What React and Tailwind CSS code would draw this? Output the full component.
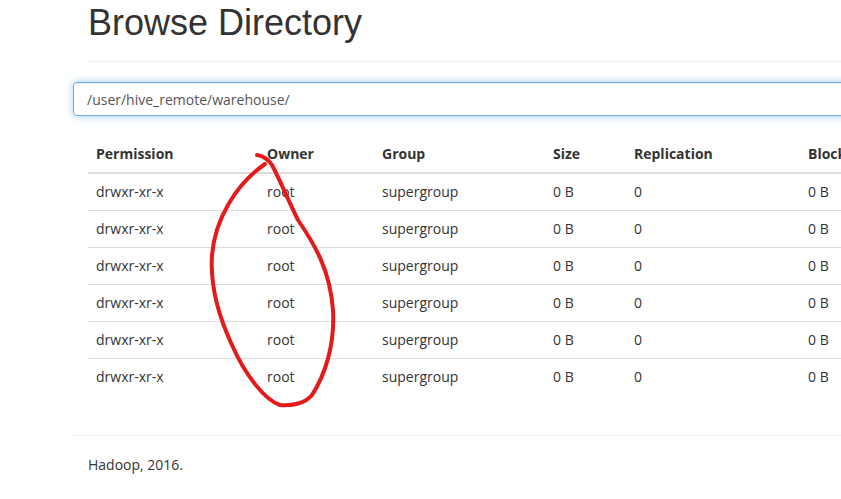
const rows = Array.from({ length: 6 }, () => ({
  perm: 'drwxr-xr-x', owner: 'root', group: 'supergroup', size: '0 B', repl: '0', block: '0 B',
}))

const cols = [
  { label: 'Permission', w: 'w-[171px]' },
  { label: 'Owner', w: 'w-[115px]' },
  { label: 'Group', w: 'w-[171px]' },
  { label: 'Size', w: 'w-[81px]' },
  { label: 'Replication', w: 'w-[174px]' },
  { label: 'Block Size', w: 'w-[120px]' },
]

export default function App() {
  return (
    <div className="relative w-[841px] h-[499px] overflow-hidden bg-white text-[#333]" style={{ fontFamily: '"Open Sans", "Noto Sans", sans-serif' }}>
      <div className="w-[1200px] pl-[73px]">
        <div className="ml-[15px] h-[62px] pt-[3px] border-b border-[#eee]">
          <h1 className="text-[36px] leading-[1.1] font-normal" style={{ fontFamily: '"Liberation Sans", Arial, sans-serif' }}>Browse Directory</h1>
        </div>
        <div className="mt-[20px] h-[34px] w-[900px] rounded border border-[#66afe9] shadow-[inset_0_1px_1px_rgba(0,0,0,0.075),0_0_8px_rgba(102,175,233,0.6)] flex items-center pl-[13px] text-[14px] text-[#555]">
          /user/hive_remote/warehouse/
        </div>
        <table className="ml-[15px] mt-[20px] table-fixed border-collapse text-[14px] leading-5">
          <thead>
            <tr className="border-b-2 border-[#ddd]">
              {cols.map(c => <th key={c.label} className={`${c.w} p-2 text-left font-bold whitespace-nowrap`}>{c.label}</th>)}
            </tr>
          </thead>
          <tbody>
            {rows.map((r, i) => (
              <tr key={i} className={i > 0 ? 'border-t border-[#ddd]' : ''}>
                <td className="p-2">{r.perm}</td>
                <td className="p-2">{r.owner}</td>
                <td className="p-2">{r.group}</td>
                <td className="p-2">{r.size}</td>
                <td className="p-2">{r.repl}</td>
                <td className="p-2">{r.block}</td>
              </tr>
            ))}
          </tbody>
        </table>
        <div className="mt-[40px] border-t border-[#eee] pt-[19px]">
          <p className="ml-[15px] text-[14px] leading-5">Hadoop, 2016.</p>
        </div>
      </div>
      <svg className="absolute left-0 top-0 pointer-events-none" width="841" height="499" viewBox="0 0 841 499">
        <path d="M257 155 C263 156 268 159 272 165 C280 180 288 200 298 220 C315 245 330 270 333 310 C335 345 325 375 312 395 C305 404 290 406 280 405 C265 400 245 375 232 345 C218 315 210 285 212 255 C215 220 235 185 265 164" fill="none" stroke="#e41b1b" strokeWidth="4" strokeLinecap="round" strokeLinejoin="round" />
      </svg>
    </div>
  )
}
